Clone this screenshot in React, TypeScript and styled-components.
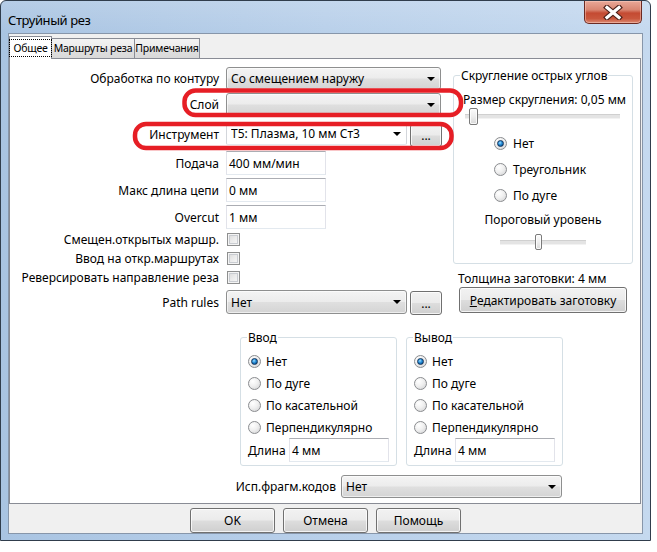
import React from "react";
import styled, { createGlobalStyle, css } from "styled-components";

const uiFont = `"Noto Sans", "Liberation Sans", sans-serif`;

const GlobalStyle = createGlobalStyle`
  * { box-sizing: border-box; }
  html, body { margin: 0; padding: 0; background: #ffffff; }
  body {
    font-family: ${uiFont};
    font-size: 12px;
    line-height: 15px;
    color: #000;
  }
`;

const Screen = styled.div`
  position: relative;
  width: 657px;
  height: 552px;
`;

const Window = styled.div`
  width: 651px;
  height: 541px;
  border: 1px solid #303d4c;
  border-radius: 6px 6px 0 0;
  padding: 0 7px 6px;
  display: flex;
  flex-direction: column;
  background:
    linear-gradient(180deg, rgba(255, 255, 255, 0.15) 0px, rgba(255, 255, 255, 0) 32px),
    linear-gradient(90deg, #a9c4e2 0%, #b9d0ea 50%, #c5d9ef 100%);
`;

const TitleBar = styled.div`
  height: 32px;
  flex: none;
  display: flex;
  align-items: flex-start;
  justify-content: space-between;
`;

const Title = styled.div`
  margin-top: 10px;
  font-size: 13px;
  letter-spacing: -0.4px;
  line-height: 18px;
`;

const CloseButton = styled.div`
  width: 58px;
  height: 23px;
  margin-right: 1px;
  border: 1px solid #6b2a22;
  border-top: none;
  border-radius: 0 0 5px 5px;
  background: linear-gradient(180deg, #e9a898 0%, #d98672 40%, #c44a32 55%, #c9573d 80%, #dc8a72 100%);
  box-shadow: inset 0 0 0 1px rgba(255, 215, 205, 0.45);
  display: flex;
  align-items: center;
  justify-content: center;
`;

const Client = styled.div`
  flex: 1;
  border: 1px solid #8796aa;
  background: #f0f0f0;
  display: flex;
  flex-direction: column;
`;

const TabStrip = styled.div`
  height: 24px;
  flex: none;
  display: flex;
  align-items: flex-end;
`;

const Tab = styled.div<{ $active?: boolean; $w: number }>`
  position: relative;
  width: ${(p) => p.$w}px;
  height: 20px;
  border: 1px solid #898c95;
  border-bottom: none;
  background: linear-gradient(180deg, #f3f3f3 0%, #ebebeb 50%, #e0e0e0 51%, #d9d9d9 100%);
  display: flex;
  align-items: center;
  justify-content: center;
  white-space: nowrap;
  font-size: 10.5px;
  letter-spacing: -0.2px;

  & + & {
    margin-left: -1px;
  }

  ${(p) =>
    p.$active &&
    css`
      height: 23px;
      margin-bottom: -1px;
      background: #ffffff;
      z-index: 1;
    `}
`;

const FocusText = styled.span`
  border: 1px dotted #000;
  padding: 1px 3px;
  line-height: 14px;
`;

const Panel = styled.div`
  height: 446px;
  flex: none;
  margin-right: 1px;
  border: 1px solid #898c95;
  background: #ffffff;
  padding-top: 8px;
  display: flex;
  flex-direction: column;
`;

const TopSection = styled.div`
  display: flex;
  align-items: flex-start;
`;

const Form = styled.div`
  width: 432px;
  display: flex;
  flex-direction: column;
`;

const FormRow = styled.div<{ $h: number; $ch: number }>`
  height: ${(p) => p.$h}px;
  display: grid;
  grid-template-columns: 209px auto;
  grid-template-rows: ${(p) => p.$ch}px;
  column-gap: 7px;
  align-items: center;
`;

const FieldLabel = styled.div`
  text-align: right;
  white-space: nowrap;
`;

const Controls = styled.div`
  display: flex;
  align-items: flex-start;
  gap: 3px;
  height: 100%;
`;

const ComboBox = styled.div<{ $w: number; $h?: number; $white?: boolean }>`
  width: ${(p) => p.$w}px;
  height: ${(p) => p.$h ?? 23}px;
  flex: none;
  border: 1px solid #8e8f8f;
  border-radius: 3px;
  background: linear-gradient(180deg, #f4f4f4 0%, #ececec 48%, #dfdfdf 52%, #d4d4d4 100%);
  box-shadow: inset 0 0 0 1px rgba(255, 255, 255, 0.6);
  display: flex;
  align-items: center;
  padding: 0 5px 0 4px;
  white-space: nowrap;

  ${(p) =>
    p.$white &&
    css`
      background: #ffffff;
      box-shadow: none;
      border-color: #d3d6db #d3d6db #e3e9ef;
      border-top-color: #abadb3;
      border-radius: 2px;
    `}
`;

const ComboText = styled.span`
  flex: 1;
  overflow: hidden;
`;

const Arrow = styled.span`
  width: 0;
  height: 0;
  border-left: 4px solid transparent;
  border-right: 4px solid transparent;
  border-top: 4px solid #000;
`;

const PushButton = styled.div<{ $w: number; $h?: number; $top?: number; $left?: number }>`
  width: ${(p) => p.$w}px;
  height: ${(p) => p.$h ?? 25}px;
  margin-top: ${(p) => p.$top ?? 0}px;
  margin-left: ${(p) => p.$left ?? 0}px;
  flex: none;
  border: 1px solid #707070;
  border-radius: 3px;
  background: linear-gradient(180deg, #f2f2f2 0%, #ebebeb 48%, #dddddd 52%, #cfcfcf 100%);
  box-shadow: inset 0 0 0 1px rgba(255, 255, 255, 0.75);
  display: flex;
  align-items: center;
  justify-content: center;
  white-space: nowrap;
`;

const TextBox = styled.div<{ $w?: number }>`
  width: ${(p) => p.$w ?? 100}px;
  height: 24px;
  flex: none;
  border: 1px solid #e2e3ea;
  border-top-color: #abadb3;
  border-bottom-color: #e3e9ef;
  background: #ffffff;
  padding-left: 2px;
  display: flex;
  align-items: center;
  white-space: nowrap;
`;

const CheckBox = styled.span`
  width: 13px;
  height: 13px;
  margin-left: 1px;
  border: 1px solid #8e8f8f;
  background: linear-gradient(135deg, #d8d8d8 0%, #ebebeb 50%, #fafafa 100%);
  box-shadow: inset 0 0 0 1px #f4f4f4, inset 0 0 0 2px #c9ccd1;
`;

const RightColumn = styled.div`
  width: 180px;
  margin-left: 11px;
  margin-top: 8px;
  display: flex;
  flex-direction: column;
`;

const GroupBox = styled.div<{ $w: number; $pad: string }>`
  position: relative;
  width: ${(p) => p.$w}px;
  flex: none;
  border: 1px solid #d5dfe5;
  border-radius: 3px;
  padding: ${(p) => p.$pad};
  display: flex;
  flex-direction: column;
`;

const GroupTitle = styled.span`
  position: absolute;
  top: -8px;
  left: 6px;
  padding: 0 1px;
  background: #ffffff;
  white-space: nowrap;
`;

const PlainText = styled.div<{ $center?: boolean; $top?: number }>`
  white-space: nowrap;
  margin-top: ${(p) => p.$top ?? 0}px;
  text-align: ${(p) => (p.$center ? "center" : "left")};
`;

const Slider = styled.div<{ $w: number; $inset: string; $top: number; $center?: boolean }>`
  position: relative;
  width: ${(p) => p.$w}px;
  height: 17px;
  margin-top: ${(p) => p.$top}px;
  align-self: ${(p) => (p.$center ? "center" : "flex-start")};

  &::before {
    content: "";
    position: absolute;
    inset: ${(p) => p.$inset};
    height: 3px;
    border-top: 1px solid #d0d0d0;
    border-bottom: 1px solid #f2f2f2;
    background: #e4e4e4;
  }
`;

const Thumb = styled.span<{ $left: number; $w: number; $h: number }>`
  position: absolute;
  top: 0;
  left: ${(p) => p.$left}px;
  width: ${(p) => p.$w}px;
  height: ${(p) => p.$h}px;
  border: 1px solid #7a7a7a;
  border-radius: 2px;
  background: linear-gradient(180deg, #fbfbfb 0%, #eeeeee 50%, #d8d8d8 100%);
  box-shadow: inset 0 0 0 1px rgba(255, 255, 255, 0.8);
`;

const RadioList = styled.div<{ $left?: number; $top?: number }>`
  display: flex;
  flex-direction: column;
  margin-left: ${(p) => p.$left ?? 0}px;
  margin-top: ${(p) => p.$top ?? 0}px;
`;

const RadioRow = styled.div<{ $h: number; $gap: number }>`
  height: ${(p) => p.$h}px;
  display: flex;
  align-items: center;
  gap: ${(p) => p.$gap}px;
  white-space: nowrap;
`;

const RadioDot = styled.span<{ $checked?: boolean }>`
  position: relative;
  width: 13px;
  height: 13px;
  flex: none;
  border-radius: 50%;
  border: 1px solid #8a8c8f;
  background: radial-gradient(circle at 35% 30%, #ffffff 0%, #f0f0f0 45%, #cfd0d2 100%);

  ${(p) =>
    p.$checked &&
    css`
      &::after {
        content: "";
        position: absolute;
        inset: 2px;
        border-radius: 50%;
        border: 1px solid #13335a;
        background: radial-gradient(circle at 40% 35%, #aee2ff 0%, #3fa3e6 30%, #106bb4 65%, #0a3d73 100%);
      }
    `}
`;

const EditBlock = styled.div`
  display: flex;
  flex-direction: column;
  padding-left: 5px;
`;

const BottomSection = styled.div`
  width: 552px;
  margin-top: 23px;
  padding-left: 230px;
  display: flex;
  flex-direction: column;
`;

const GroupsRow = styled.div`
  display: flex;
  gap: 9px;
`;

const LengthRow = styled.div`
  height: 24px;
  display: flex;
  align-items: center;
  justify-content: space-between;
`;

const CodesRow = styled.div`
  margin-top: 9px;
  display: flex;
  align-items: center;
  justify-content: flex-end;
  gap: 5px;
`;

const ButtonBar = styled.div`
  flex: 1;
  display: flex;
  justify-content: center;
  gap: 8px;
  padding-top: 4px;
`;

const Annotation = styled.svg`
  position: absolute;
  left: 0;
  top: 0;
  pointer-events: none;
`;

function Combo({ w, h, white, text }: { w: number; h?: number; white?: boolean; text?: string }) {
  return (
    <ComboBox $w={w} $h={h} $white={white}>
      <ComboText>{text}</ComboText>
      <Arrow />
    </ComboBox>
  );
}

function Radio({ label, checked, h, gap }: { label: string; checked?: boolean; h: number; gap: number }) {
  return (
    <RadioRow $h={h} $gap={gap}>
      <RadioDot $checked={checked} />
      <span>{label}</span>
    </RadioRow>
  );
}

function LeadGroup({ title }: { title: string }) {
  return (
    <GroupBox $w={157} $pad="12px 7px 3px 7px">
      <GroupTitle>{title}</GroupTitle>
      <Radio label="Нет" checked h={22} gap={5} />
      <Radio label="По дуге" h={22} gap={5} />
      <Radio label="По касательной" h={22} gap={5} />
      <Radio label="Перпендикулярно" h={22} gap={5} />
      <LengthRow>
        <span>Длина</span>
        <TextBox>4 мм</TextBox>
      </LengthRow>
    </GroupBox>
  );
}

export default function App() {
  return (
    <Screen>
      <GlobalStyle />
      <Window>
        <TitleBar>
          <Title>Струйный рез</Title>
          <CloseButton>
            <svg width="22" height="15" viewBox="0 0 22 15">
              <path d="M5 2.5 L17 12.5 M17 2.5 L5 12.5" stroke="#4b2019" strokeWidth="5.5" strokeLinecap="square" />
              <path d="M5 2.5 L17 12.5 M17 2.5 L5 12.5" stroke="#ffffff" strokeWidth="3.2" strokeLinecap="square" />
            </svg>
          </CloseButton>
        </TitleBar>
        <Client>
          <TabStrip>
            <Tab $active $w={43}>
              <FocusText>Общее</FocusText>
            </Tab>
            <Tab $w={84}>Маршруты реза</Tab>
            <Tab $w={66}>Примечания</Tab>
          </TabStrip>
          <Panel>
            <TopSection>
              <Form>
                <FormRow $h={26} $ch={23}>
                  <FieldLabel>Обработка по контуру</FieldLabel>
                  <Combo w={215} text="Со смещением наружу" />
                </FormRow>
                <FormRow $h={29} $ch={23}>
                  <FieldLabel>Слой</FieldLabel>
                  <Combo w={215} />
                </FormRow>
                <FormRow $h={29} $ch={25}>
                  <FieldLabel>Инструмент</FieldLabel>
                  <Controls>
                    <Combo w={181} white text="T5: Плазма, 10 мм Ст3" />
                    <PushButton $w={32} $h={23} $top={2}>...</PushButton>
                  </Controls>
                </FormRow>
                <FormRow $h={27} $ch={24}>
                  <FieldLabel>Подача</FieldLabel>
                  <TextBox>400 мм/мин</TextBox>
                </FormRow>
                <FormRow $h={27} $ch={24}>
                  <FieldLabel>Макс длина цепи</FieldLabel>
                  <TextBox>0 мм</TextBox>
                </FormRow>
                <FormRow $h={28} $ch={24}>
                  <FieldLabel>Overcut</FieldLabel>
                  <TextBox>1 мм</TextBox>
                </FormRow>
                <FormRow $h={19} $ch={13}>
                  <FieldLabel>Смещен.открытых маршр.</FieldLabel>
                  <CheckBox />
                </FormRow>
                <FormRow $h={19} $ch={13}>
                  <FieldLabel>Ввод на откр.маршрутах</FieldLabel>
                  <CheckBox />
                </FormRow>
                <FormRow $h={19} $ch={13}>
                  <FieldLabel>Реверсировать направление реза</FieldLabel>
                  <CheckBox />
                </FormRow>
                <FormRow $h={24} $ch={24}>
                  <FieldLabel>Path rules</FieldLabel>
                  <Controls>
                    <Combo w={181} h={24} text="Нет" />
                    <PushButton $w={32} $h={24} $top={1}>...</PushButton>
                  </Controls>
                </FormRow>
              </Form>
              <RightColumn>
                <GroupBox $w={180} $pad="16px 9px 12px 9px">
                  <GroupTitle>Скругление острых углов</GroupTitle>
                  <PlainText>Размер скругления: 0,05 мм</PlainText>
                  <Slider $w={160} $inset="6px 3px auto 2px" $top={1}>
                    <Thumb $left={6} $w={9} $h={17} />
                  </Slider>
                  <RadioList $left={31} $top={5}>
                    <Radio label="Нет" checked h={26} gap={6} />
                    <Radio label="Треугольник" h={26} gap={6} />
                    <Radio label="По дуге" h={26} gap={6} />
                  </RadioList>
                  <PlainText $center $top={4}>
                    Пороговый уровень
                  </PlainText>
                  <Slider $w={86} $inset="6px 0 auto 0" $top={7} $center>
                    <Thumb $left={35} $w={7} $h={16} />
                  </Slider>
                </GroupBox>
                <EditBlock>
                  <PlainText $top={7}>Толщина заготовки: 4 мм</PlainText>
                  <PushButton $w={168} $h={26} $top={1} $left={1}>
                    <span>
                      <u>Р</u>едактировать заготовку
                    </span>
                  </PushButton>
                </EditBlock>
              </RightColumn>
            </TopSection>
            <BottomSection>
              <GroupsRow>
                <LeadGroup title="Ввод" />
                <LeadGroup title="Вывод" />
              </GroupsRow>
              <CodesRow>
                <span>Исп.фрагм.кодов</span>
                <Combo w={221} text="Нет" />
              </CodesRow>
            </BottomSection>
          </Panel>
          <ButtonBar>
            <PushButton $w={85}>OK</PushButton>
            <PushButton $w={85}>Отмена</PushButton>
            <PushButton $w={85}>Помощь</PushButton>
          </ButtonBar>
        </Client>
      </Window>
      <Annotation width="657" height="552" viewBox="0 0 657 552">
        <rect x="184.5" y="90.5" width="276.5" height="24.5" rx="11" fill="none" stroke="#e61e25" strokeWidth="4.5" />
        <rect x="135" y="124" width="316.5" height="24" rx="11" fill="none" stroke="#e61e25" strokeWidth="4.5" />
      </Annotation>
    </Screen>
  );
}
